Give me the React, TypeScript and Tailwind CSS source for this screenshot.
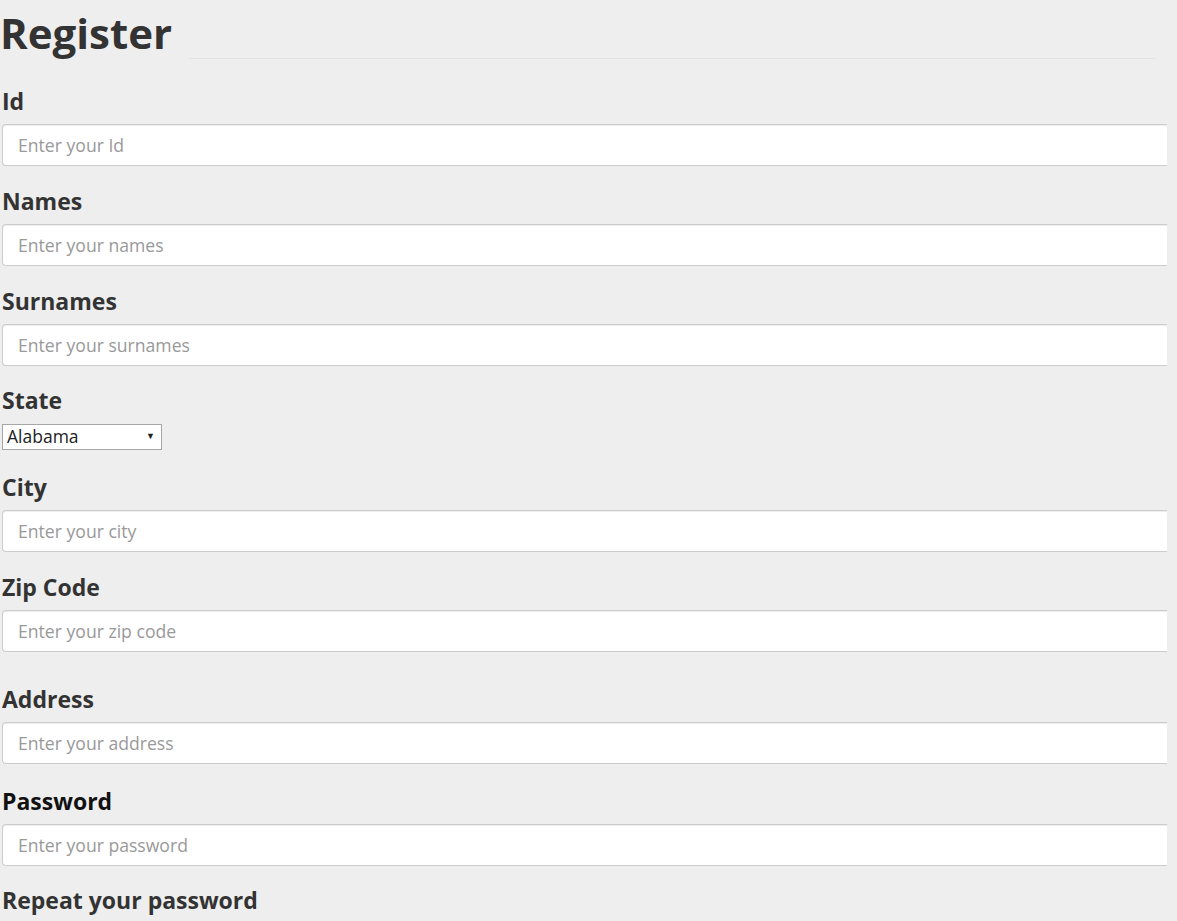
import React from 'react';

type Field = {
  label: string;
  placeholder: string;
  mt: string;
  dark?: boolean;
  type?: string;
};

const top: Field[] = [
  { label: 'Id', placeholder: 'Enter your Id', mt: 'mt-[27px]' },
  { label: 'Names', placeholder: 'Enter your names', mt: 'mt-[20px]' },
  { label: 'Surnames', placeholder: 'Enter your surnames', mt: 'mt-[20px]' },
];

const bottom: Field[] = [
  { label: 'City', placeholder: 'Enter your city', mt: 'mt-[22px]' },
  { label: 'Zip Code', placeholder: 'Enter your zip code', mt: 'mt-[20px]' },
  { label: 'Address', placeholder: 'Enter your address', mt: 'mt-[32px]' },
  { label: 'Password', placeholder: 'Enter your password', mt: 'mt-[22px]', dark: true, type: 'password' },
];

const FormField = ({ f }: { f: Field }) => (
  <div className={f.mt}>
    <label className={`block text-[23px] font-bold leading-[30px] mb-[8px] ${f.dark ? 'text-[#111]' : 'text-[#333]'}`}>
      {f.label}
    </label>
    <input
      type={f.type ?? 'text'}
      placeholder={f.placeholder}
      className="block w-[1165px] h-[42px] bg-white border border-r-0 border-[#ccc] rounded-l-[4px] pl-[15px] text-[17.6px] text-[#555] placeholder:text-[#999] shadow-[inset_0_1px_1px_rgba(0,0,0,0.075)] outline-none"
    />
  </div>
);

export default function App() {
  return (
    <div className="min-h-screen bg-[#eeeeee] font-['Open_Sans',sans-serif] text-[#333]">
      <div className="flex items-end h-[59px]">
        <h1 className="text-[42px] font-bold leading-[42px] mb-[5px] text-[#333]">Register</h1>
        <div className="flex-1 ml-[17px] mr-[21px] border-b border-[#e2e2e2]" />
      </div>

      <div className="pl-[2px] pb-[20px]">
        {top.map(f => (
          <FormField key={f.label} f={f} />
        ))}

        <div className="mt-[19px]">
          <label className="block text-[23px] font-bold leading-[30px] mb-[9px] text-[#333]">State</label>
          <div className="relative w-[160px] h-[26px]">
            <select className="appearance-none w-full h-full bg-white border border-[#a6a6a6] pl-[4px] text-[17.5px] leading-none text-[#222] outline-none">
              <option>Alabama</option>
              <option>Alaska</option>
              <option>Arizona</option>
              <option>Arkansas</option>
              <option>California</option>
            </select>
            <span className="pointer-events-none absolute right-[7px] top-[7px] text-[9px] leading-none text-[#222]">▼</span>
          </div>
        </div>

        {bottom.map(f => (
          <FormField key={f.label} f={f} />
        ))}

        <div className="mt-[19px]">
          <label className="block text-[23px] font-bold leading-[30px] text-[#333]">Repeat your password</label>
        </div>
      </div>
    </div>
  );
}
